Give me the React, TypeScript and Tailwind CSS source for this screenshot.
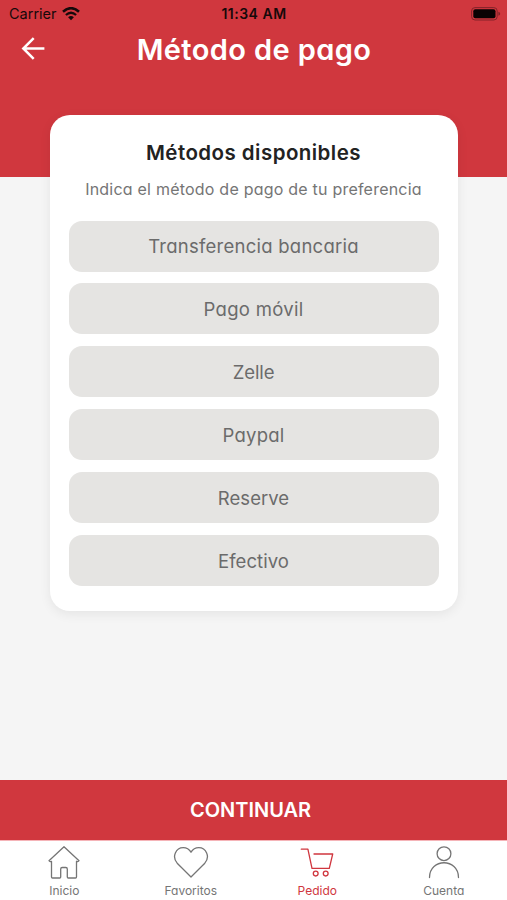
import type { ReactNode } from "react";

const methods = [
  { label: "Transferencia bancaria", tracking: "tracking-[0.25px]" },
  { label: "Pago móvil", tracking: "tracking-[0.3px]" },
  { label: "Zelle", tracking: "tracking-[-0.1px]" },
  { label: "Paypal", tracking: "tracking-[0.2px]" },
  { label: "Reserve", tracking: "tracking-[0.05px]" },
  { label: "Efectivo", tracking: "tracking-[0.05px]" },
];

function Wifi() {
  return (
    <svg width="18" height="14" viewBox="0 0 18 14" fill="none" stroke="#16090a">
      <path d="M1 4.7Q9-2.3 17 4.7" strokeWidth="2.6" />
      <path d="M3.9 8Q9 3.6 14.1 8" strokeWidth="2.3" />
      <path d="M6.1 10.3Q9 7.7 11.9 10.3L9 13.3Z" fill="#16090a" stroke="none" />
    </svg>
  );
}

function Battery() {
  return (
    <svg width="30" height="14" viewBox="0 0 30 14">
      <rect x="0.6" y="0.6" width="25.6" height="12.4" rx="3.4" fill="none" stroke="#832329" />
      <rect x="2.3" y="2.3" width="22.2" height="9" rx="2" fill="#090203" />
      <path d="M27.4 4.8Q29.2 5.4 29.2 6.8T27.4 8.8Z" fill="#832329" />
    </svg>
  );
}

function Tab({ label, active, children }: { label: string; active?: boolean; children: ReactNode }) {
  return (
    <button className={`flex flex-1 flex-col items-center pt-[5px] ${active ? "text-[#d0363e]" : "text-[#757575]"}`}>
      <svg width="36" height="36" viewBox="0 0 36 36" fill="none" stroke="currentColor" strokeWidth="1.3" strokeLinecap="round" strokeLinejoin="round">
        {children}
      </svg>
      <span className="mt-[1px] text-[12px] leading-[16px]">{label}</span>
    </button>
  );
}

export default function App() {
  return (
    <div className="flex h-[900px] w-full flex-col overflow-hidden bg-[#f5f5f5] font-['Inter','Noto_Sans',sans-serif] [font-feature-settings:'cv11']">
      <header className="h-[177px] shrink-0 bg-[#d0373e]">
        <div className="grid h-[27px] grid-cols-3 items-center pl-[9px] pr-[8px] text-[#16090a] [font-feature-settings:normal]">
          <div className="flex items-center gap-[5px] text-[14.5px]">
            <span>Carrier</span>
            <Wifi />
          </div>
          <span className="text-center text-[14px] font-semibold tracking-[0.5px]">11:34 AM</span>
          <div className="-mr-[2px] flex justify-end"><Battery /></div>
        </div>
        <div className="grid h-[44px] grid-cols-[67px_1fr_66px] items-center">
          <svg className="ml-[20px]" width="26" height="26" viewBox="0 0 26 26" fill="none" stroke="#fff" strokeWidth="2.5">
            <path d="M24.4 12.5H3M13.7 2.1L3.3 12.5L13.7 22.9" />
          </svg>
          <h1 className="pt-[2px] text-center text-[29px] font-semibold leading-[40px] tracking-[0.4px] text-white">Método de pago</h1>
        </div>
      </header>
      <main className="mx-auto -mt-[62px] h-[496px] w-[408px] shrink-0 rounded-[20px] bg-white px-[19px] pt-[24px] shadow-[0_3px_12px_rgba(0,0,0,0.07)]">
        <h2 className="text-center text-[20.5px] font-semibold leading-[28px] tracking-[0.45px] text-[#222]">Métodos disponibles</h2>
        <p className="mt-[11px] whitespace-nowrap text-center text-[16px] leading-[22px] tracking-[0.22px] text-[#757575]">Indica el método de pago de tu preferencia</p>
        <div className="mt-[20.5px] flex flex-col gap-[11.9px]">
          {methods.map((m) => (
            <button key={m.label} className={`h-[51px] w-full rounded-[13px] bg-[#e5e4e2] pt-[2px] text-[18.5px] text-[#6b6b6b] ${m.tracking}`}>{m.label}</button>
          ))}
        </div>
      </main>
      <button className="mt-auto h-[60px] shrink-0 bg-[#d0373e] pr-[6px] text-[20px] font-semibold text-white">CONTINUAR</button>
      <nav className="flex h-[60px] shrink-0 border-t border-[#f5b4b8] bg-white pl-[1px]">
        <Tab label="Inicio">
          <path d="M18 0.8L33 14.7Q31.8 16.3 30.5 15.3V31Q30.5 32 29.5 32H22.3Q21.3 32 21.3 31V23Q21.3 21.5 19.8 21.5H16.2Q14.7 21.5 14.7 23V31Q14.7 32 13.7 32H6.5Q5.5 32 5.5 31V15.3Q4.2 16.3 3 14.7Z" />
        </Tab>
        <Tab label="Favoritos">
          <path d="M18 31L4.2 17.2C-1.5 10.5 3 1.6 10.2 1.6C14 1.6 16.3 3.3 18 6.2C19.7 3.3 22 1.6 25.8 1.6C33 1.6 37.5 10.5 31.8 17.2Z" />
        </Tab>
        <Tab label="Pedido" active>
          <path d="M2.3 3.2H8.9L13 22.3H30.3L33.7 8H15" />
          <circle cx="16.7" cy="27.6" r="2.4" />
          <circle cx="26.7" cy="27.6" r="2.4" />
        </Tab>
        <Tab label="Cuenta">
          <circle cx="18" cy="7.7" r="6.9" />
          <path d="M3.5 31.5C3.5 11.8 32.5 11.8 32.5 31.5" />
        </Tab>
      </nav>
    </div>
  );
}
